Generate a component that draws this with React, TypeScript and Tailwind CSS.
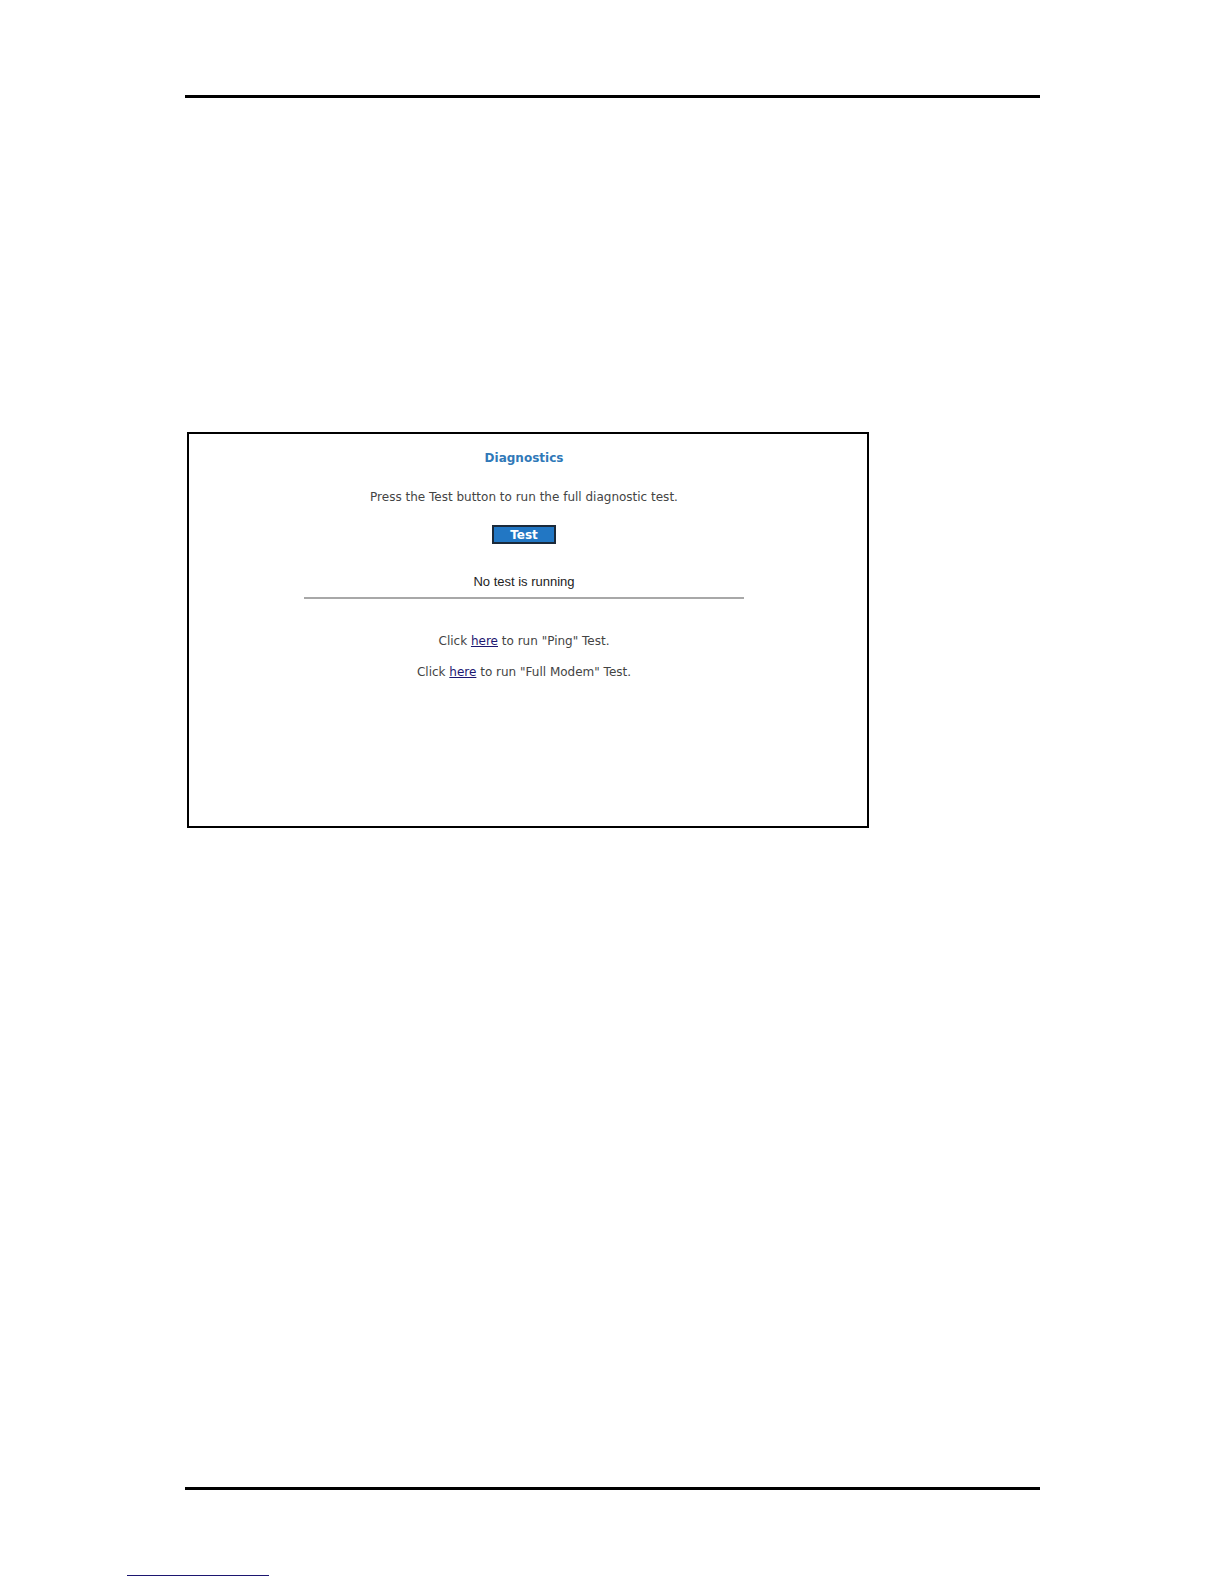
const TESTS = [
  { name: "Ping", href: "#ping" },
  { name: "Full Modem", href: "#full-modem" },
];

function DiagnosticsPanel() {
  return (
    <section className="ml-0.5 flex min-h-[396px] w-full max-w-[682px] flex-col items-center border-2 border-black pt-4 pr-2 text-center font-['DejaVu_Sans',sans-serif] text-xs leading-4 text-[#444444]">
      <h1 className="font-bold text-[#3079b8]">Diagnostics</h1>
      <p className="mt-[23px]">Press the Test button to run the full diagnostic test.</p>
      <button
        type="button"
        className="mt-5 flex h-[19px] w-16 items-center justify-center border-2 border-[#1b2a3a] bg-[#2277c4] font-bold text-white"
      >
        Test
      </button>
      <div className="mt-[30px] w-2/3 max-w-[440px] border-b-2 border-[#a8a8a8] pb-[7px]">
        <p className="font-['Liberation_Sans',sans-serif] text-[13px] text-[#222222]">
          No test is running
        </p>
      </div>
      <div className="mt-[34px] flex flex-col gap-[15px]">
        {TESTS.map((test) => (
          <p key={test.name}>
            Click{" "}
            <a href={test.href} className="text-[#1c1670] underline">
              here
            </a>{" "}
            to run "{test.name}" Test.
          </p>
        ))}
      </div>
    </section>
  );
}

export default function App() {
  return (
    <div className="flex min-h-screen flex-col bg-white pt-[95px] pb-2">
      <main className="mr-[184px] ml-[185px] flex grow flex-col border-y-[3px] border-black pt-[334px]">
        <DiagnosticsPanel />
      </main>
      <footer className="ml-[127px] pt-[85px]">
        <div className="w-[142px] border-b border-[#1c1670]" />
      </footer>
    </div>
  );
}
